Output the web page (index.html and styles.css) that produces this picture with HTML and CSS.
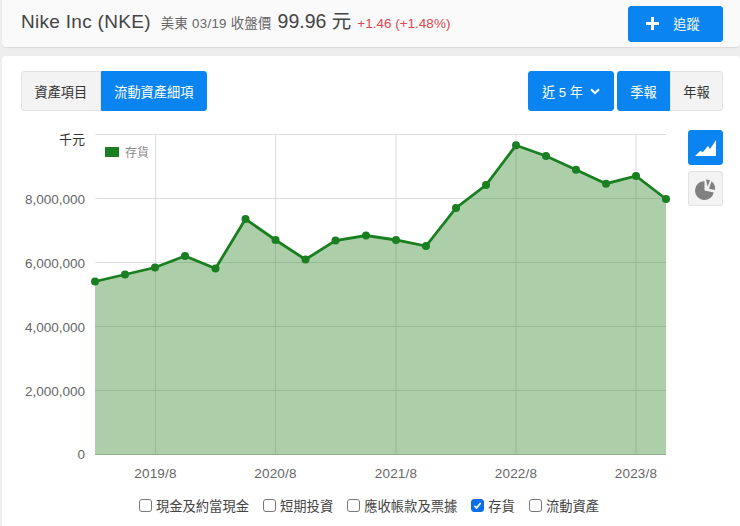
FILE: index.html
```html
<!DOCTYPE html>
<html lang="zh-Hant">
<head>
    <meta charset="UTF-8">
    <title>Nike Inc (NKE) 流動資產細項</title>
    <link rel="stylesheet" href="styles.css">
</head>
<body>

<header class="quote-bar">
    <div class="quote">
        <span class="quote-name">Nike Inc (NKE)</span>
        <span class="quote-date">美東 03/19 收盤價</span>
        <span class="quote-price">99.96 元</span>
        <span class="quote-change">+1.46 (+1.48%)</span>
    </div>
    <button class="btn btn-track">
        <svg class="plus" width="15" height="15" viewBox="0 0 15 15"><path d="M7.5 1v13M1 7.5h13" stroke="#fff" stroke-width="3"/></svg>
        <span>追蹤</span>
    </button>
</header>

<main class="panel">
    <div class="toolbar">
        <div class="btn-group">
            <button class="btn btn-off">資產項目</button>
            <button class="btn btn-on">流動資產細項</button>
        </div>
        <div class="toolbar-right">
            <button class="btn btn-on btn-range">近 5 年
                <svg width="10" height="7" viewBox="0 0 10 7"><path d="M1 1.2l4 4 4-4" fill="none" stroke="#fff" stroke-width="2"/></svg>
            </button>
            <div class="btn-group">
                <button class="btn btn-on btn-period">季報</button>
                <button class="btn btn-off btn-period">年報</button>
            </div>
        </div>
    </div>

    <div class="chart-row">
        <svg class="chart" width="680" height="362" viewBox="0 130 680 362">
            <path class="grid" d="M95 134.500H666M95 198.500H666M95 262.500H666M95 326.500H666M95 390.500H666"/>
            <path class="grid" d="M155.500 134V454M275.500 134V454M396 134V454M516 134V454M636 134V454"/>
            <path class="area" d="M95 281.500L125 274.500 155 267.500 185 256 215.500 268.500 245.500 219 275.500 240 305.500 259.500 335.500 240.500 366 235.500 396 240 426 246 456 208 486 185 516 145.300 546 156 576 169.700 606 183.700 636 176 666 199V454H95Z"/>
            <path class="axis" d="M95 454.500H666"/>
            <path class="line" d="M95 281.500L125 274.500 155 267.500 185 256 215.500 268.500 245.500 219 275.500 240 305.500 259.500 335.500 240.500 366 235.500 396 240 426 246 456 208 486 185 516 145.300 546 156 576 169.700 606 183.700 636 176 666 199"/>
            <g class="dots">
                <circle cx="95" cy="281.500" r="4"/><circle cx="125" cy="274.500" r="4"/>
                <circle cx="155" cy="267.500" r="4"/><circle cx="185" cy="256" r="4"/>
                <circle cx="215.500" cy="268.500" r="4"/><circle cx="245.500" cy="219" r="4"/>
                <circle cx="275.500" cy="240" r="4"/><circle cx="305.500" cy="259.500" r="4"/>
                <circle cx="335.500" cy="240.500" r="4"/><circle cx="366" cy="235.500" r="4"/>
                <circle cx="396" cy="240" r="4"/><circle cx="426" cy="246" r="4"/>
                <circle cx="456" cy="208" r="4"/><circle cx="486" cy="185" r="4"/>
                <circle cx="516" cy="145.300" r="4"/><circle cx="546" cy="156" r="4"/>
                <circle cx="576" cy="169.700" r="4"/><circle cx="606" cy="183.700" r="4"/>
                <circle cx="636" cy="176" r="4"/><circle cx="666" cy="199" r="4"/>
            </g>
            <rect class="legend-box" x="105" y="147" width="14" height="10"/>
            <text class="legend-text" x="125" y="157">存貨</text>
            <g class="y-labels">
                <text class="y-unit" x="85" y="144">千元</text>
                <text x="85" y="204">8,000,000</text>
                <text x="85" y="268">6,000,000</text>
                <text x="85" y="332">4,000,000</text>
                <text x="85" y="396">2,000,000</text>
                <text x="85" y="459">0</text>
            </g>
            <g class="x-labels">
                <text x="155.500" y="478">2019/8</text>
                <text x="275.500" y="478">2020/8</text>
                <text x="396" y="478">2021/8</text>
                <text x="516" y="478">2022/8</text>
                <text x="636" y="478">2023/8</text>
            </g>
        </svg>
        <div class="chart-types">
            <button class="type-btn type-on">
                <svg width="22" height="18" viewBox="0 0 22 18"><path d="M0 17l5-5 3 1 5-6 2 3 6-9v16z" fill="#fff"/></svg>
            </button>
            <button class="type-btn">
                <svg width="24" height="24" viewBox="0 0 24 24">
                    <path d="M10.500 4a9.500 9.500 0 1 0 9.300 11.500l-9.300-2z" fill="#808080"/>
                    <path d="M12 2.500a9.500 9.500 0 0 1 4 .8l-2.400 6.500z" fill="#808080"/>
                    <path d="M17.500 4.200a9.500 9.500 0 0 1 3.500 8.800l-6-1.300z" fill="#808080"/>
                </svg>
            </button>
        </div>
    </div>

    <div class="checks">
        <label class="check"><span class="box"></span>現金及約當現金</label>
        <label class="check"><span class="box"></span>短期投資</label>
        <label class="check"><span class="box"></span>應收帳款及票據</label>
        <label class="check"><span class="box box-on">
            <svg width="13" height="13" viewBox="0 0 13 13"><path d="M2.800 6.800l2.600 2.600 4.800-5.800" fill="none" stroke="#fff" stroke-width="2"/></svg>
        </span>存貨</label>
        <label class="check"><span class="box"></span>流動資產</label>
    </div>
</main>

</body>
</html>
```

FILE: styles.css
```css
* {
    box-sizing: border-box;
}
html, body {
    height: 100%;
    overflow: hidden;
}
body {
    margin: 0;
    background-color: #eeeeee;
    font-family: "Liberation Sans", "Noto Sans CJK TC", sans-serif;
    color: #333;
}
button {
    font-family: inherit;
}
.quote-bar {
    display: flex;
    justify-content: space-between;
    align-items: center;
    height: 47px;
    margin: 0 0 9px 2px;
    padding: 0 17px 5px 19px;
    background: #fafafa;
    border-radius: 0 0 4px 4px;
    box-shadow: 0 1px 1px rgba(0, 0, 0, 0.08);
}
.quote {
    display: flex;
    align-items: baseline;
    white-space: nowrap;
    margin-top: -3px;
}
.quote-name {
    font-size: 19px;
    letter-spacing: 0.3px;
    color: #444;
}
.quote-date {
    margin-left: 10px;
    font-size: 13.300px;
    letter-spacing: 0.3px;
    color: #666;
}
.quote-price {
    margin-left: 6px;
    font-size: 19.500px;
    color: #444;
}
.quote-change {
    margin-left: 6px;
    font-size: 13.500px;
    color: #e0474c;
}
.btn {
    height: 40px;
    border: 1px solid #e2e2e2;
    border-radius: 3px;
    font-size: 13.200px;
    color: #333;
    cursor: pointer;
}
.btn-on {
    background: #0a84f0;
    border-color: #0a84f0;
    color: #fff;
}
.btn-off {
    background: #f3f3f3;
}
.btn-track {
    display: flex;
    align-items: center;
    justify-content: center;
    gap: 13px;
    width: 95px;
    height: 36px;
    margin-top: 5px;
    padding: 0 6px 0 0;
    background: #0a84f0;
    border-color: #0a84f0;
    color: #fff;
}
.panel {
    height: 470px;
    margin-left: 2px;
    padding: 15px 17px 0 19px;
    background: #fff;
    border-radius: 4px 4px 0 0;
}
.toolbar {
    display: flex;
    justify-content: space-between;
}
.toolbar-right {
    display: flex;
    gap: 3px;
}
.btn-group {
    display: flex;
}
.btn-group .btn {
    padding: 0 12.500px;
    border-radius: 3px 0 0 3px;
}
.btn-group .btn + .btn {
    border-radius: 0 3px 3px 0;
}
.btn-range {
    display: flex;
    align-items: center;
    justify-content: center;
    gap: 7px;
    width: 86px;
}
.btn-group .btn-period {
    width: 53px;
    padding: 0;
}
.chart-row {
    display: flex;
    margin: 19px 0 0 -21px;
    height: 362px;
}
.chart {
    display: block;
    flex: none;
}
.chart text {
    font-family: "Liberation Sans", "Noto Sans CJK TC", sans-serif;
    font-size: 13.500px;
    fill: #666;
}
.grid {
    fill: none;
    stroke: #dddddd;
    stroke-width: 1;
}
.area {
    fill: #1a7a14;
    fill-opacity: 0.36;
}
.axis {
    stroke: #8fb08f;
}
.line {
    fill: none;
    stroke: #1a7f20;
    stroke-width: 2.800;
}
.dots circle {
    fill: #1a7f20;
}
.legend-box {
    fill: #1a7f20;
}
.chart .legend-text {
    fill: #888;
    font-size: 12px;
}
.y-labels text {
    text-anchor: end;
}
.chart .y-unit {
    fill: #333;
    font-size: 13px;
}
.x-labels text {
    text-anchor: middle;
    letter-spacing: 0.2px;
}
.chart-types {
    display: flex;
    flex-direction: column;
    gap: 6px;
    margin-left: 8px;
}
.type-btn {
    display: flex;
    align-items: center;
    justify-content: center;
    width: 35px;
    height: 35px;
    padding: 0;
    background: #f3f3f3;
    border: 1px solid #e2e2e2;
    border-radius: 3px;
}
.type-on {
    background: #0a84f0;
    border-color: #0a84f0;
}
.checks {
    display: flex;
    justify-content: center;
    gap: 14px;
    margin: 4px 0 0 -6px;
    font-size: 13.300px;
    color: #444;
}
.check {
    display: flex;
    align-items: center;
    gap: 4px;
}
.box {
    display: flex;
    align-items: center;
    justify-content: center;
    width: 13px;
    height: 13px;
    background: #fff;
    border: 1px solid #777;
    border-radius: 3px;
}
.box-on {
    background: #0a70ea;
    border-color: #0a70ea;
}
```
